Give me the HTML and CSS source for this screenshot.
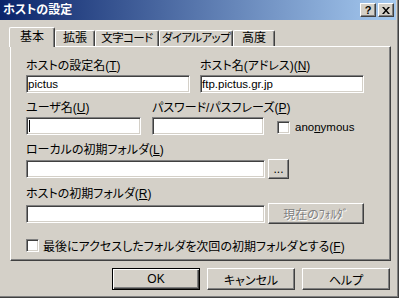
FILE: index.html
```html
<!DOCTYPE html>
<html lang="ja">
<head>
  <meta charset="UTF-8" />
  <title>ホストの設定</title>
  <link rel="stylesheet" href="styles.css">
</head>
<body>
  <div class="window">
    <div class="titlebar">
      <span class="title">ホストの設定</span>
      <div class="caption-buttons">
        <div class="cap-btn help">?</div>
        <div class="cap-btn">
          <svg width="8" height="7" viewBox="0 0 8 7"><path d="M0 0h2l2 2.5 2-2.5h2l-3 3.5 3 3.5h-2l-2-2.5-2 2.5h-2l3-3.5z" fill="#000"/></svg>
        </div>
      </div>
    </div>

    <div class="client">
      <div class="tabs">
        <div class="tab active t-basic">基本</div>
        <div class="tab t-ext">拡張</div>
        <div class="tab t-code">文字コード</div>
        <div class="tab t-dial">ダイアルアップ</div>
        <div class="tab t-adv">高度</div>
      </div>

      <div class="panel">
        <div class="row">
          <div class="field w-half">
            <div class="label">ホストの設定名(<u>T</u>)</div>
            <div class="edit">pictus</div>
          </div>
          <div class="field w-half ml-host">
            <div class="label">ホスト名(アドレス)(<u>N</u>)</div>
            <div class="edit">ftp.pictus.gr.jp</div>
          </div>
        </div>

        <div class="row bottom">
          <div class="field w-user">
            <div class="label">ユーザ名(<u>U</u>)</div>
            <div class="edit"><span class="caret"></span></div>
          </div>
          <div class="field w-pass ml-pass">
            <div class="label">パスワード/パスフレーズ(<u>P</u>)</div>
            <div class="edit"></div>
          </div>
          <div class="check ml-anon">
            <span class="box"></span>
            <span class="latin">ano<u>n</u>ymous</span>
          </div>
        </div>

        <div class="field">
          <div class="label">ローカルの初期フォルダ(<u>L</u>)</div>
          <div class="line">
            <div class="edit w-path"></div>
            <div class="btn small">...</div>
          </div>
        </div>

        <div class="field">
          <div class="label">ホストの初期フォルダ(<u>R</u>)</div>
          <div class="line">
            <div class="edit w-path"></div>
            <div class="btn current disabled">現在のﾌｫﾙﾀﾞ</div>
          </div>
        </div>

        <div class="check last">
          <span class="box"></span>
          <span>最後にアクセスしたフォルダを次回の初期フォルダとする(<u>F</u>)</span>
        </div>
      </div>

      <div class="footer">
        <div class="btn default">OK</div>
        <div class="btn">キャンセル</div>
        <div class="btn">ヘルプ</div>
      </div>
    </div>
  </div>
</body>
</html>
```

FILE: styles.css
```css
* { box-sizing: border-box; }
body { margin: 0; background: #d4d0c8; color: #000; font: 12px "Liberation Sans", "Noto Sans CJK JP", sans-serif; font-feature-settings: "palt"; }
u { text-decoration: underline; text-underline-offset: 1px; }

.window { width: 399px; height: 298px; background: #d4d0c8; border-right: 1px solid #404040; border-bottom: 1px solid #404040; box-shadow: inset -1px -1px #808080; }

.titlebar { height: 20px; margin-right: 2px; padding: 0 2px 0 3px; display: flex; align-items: center; justify-content: space-between; background: linear-gradient(to right, #0a246a, #a6caf0); }
.title { color: #fff; font-weight: bold; font-size: 12px; line-height: 20px; }
.caption-buttons { display: flex; gap: 2px; }
.cap-btn { width: 16px; height: 14px; display: flex; align-items: center; justify-content: center; background: #d4d0c8; border: 1px solid; border-color: #fff #404040 #404040 #fff; box-shadow: inset -1px -1px #808080; }
.cap-btn.help { font: bold 11px "Liberation Sans", sans-serif; line-height: 12px; }

.client { padding: 7px 7px 0 10px; }

.tabs { display: flex; align-items: flex-end; height: 19px; }
.tab { height: 16px; text-align: center; font-size: 11.5px; letter-spacing: -0.6px; line-height: 15px; white-space: nowrap; border: 1px solid; border-bottom: 0; border-color: #fff #404040 #404040 #fff; border-radius: 2px 2px 0 0; box-shadow: inset -1px 0 #808080; background: #d4d0c8; }
.tab.active { position: relative; z-index: 1; height: 20px; margin: 0 0 -1px -1px; line-height: 18px; font-size: 12px; letter-spacing: 0; }
.t-basic { width: 46px; }
.t-ext { width: 40px; letter-spacing: 0; font-size: 12px; }
.t-code { width: 64px; }
.t-dial { width: 74px; }
.t-adv { width: 42px; letter-spacing: 0; font-size: 12px; }

.panel { height: 215px; padding: 12px 0 0 15px; border: 1px solid; border-color: #fff #404040 #404040 #fff; box-shadow: inset -1px -1px #808080; display: flex; flex-direction: column; gap: 8px; }

.row { display: flex; }
.row.bottom { align-items: flex-end; }
.field { display: flex; flex-direction: column; }
.label { height: 14px; line-height: 14px; margin-bottom: 2px; white-space: nowrap; }
.line { display: flex; align-items: center; }

.w-half { width: 164px; }
.ml-host { margin-left: 10px; }
.w-user { width: 115px; }
.w-pass { width: 112px; }
.ml-pass { margin-left: 11px; }
.ml-anon { margin-left: 13px; margin-bottom: 1px; }
.w-path { width: 239px; }

.edit { height: 18px; padding: 0 1px; font-size: 11.5px; line-height: 16px; background: #fff; border: 1px solid; border-color: #808080 #fff #fff #808080; box-shadow: inset 1px 1px #404040, inset -1px -1px #d4d0c8; white-space: nowrap; overflow: hidden; }
.caret { display: inline-block; width: 1px; height: 12px; margin: 2px 0 0 1px; background: #000; vertical-align: top; }
.latin { font-size: 11.5px; }

.check { display: flex; align-items: center; gap: 5px; height: 14px; white-space: nowrap; }
.check.last { margin-top: 6px; gap: 4px; }
.box { width: 13px; height: 13px; background: #fff; border: 1px solid; border-color: #808080 #fff #fff #808080; box-shadow: inset 1px 1px #404040, inset -1px -1px #d4d0c8; }

.btn { height: 22px; width: 88px; display: flex; align-items: center; justify-content: center; background: #d4d0c8; border: 1px solid; border-color: #fff #404040 #404040 #fff; box-shadow: inset -1px -1px #808080; white-space: nowrap; }
.btn.small { width: 21px; height: 20px; margin-left: 3px; }
.btn.current { width: 96px; height: 21px; margin-left: 3px; }
.btn.disabled { color: #808080; text-shadow: 1px 1px #fff; }
.btn.default { border-color: #000; box-shadow: inset 1px 1px #fff, inset -1px -1px #404040, inset -2px -2px #808080; }

.footer { display: flex; justify-content: flex-end; gap: 7px; margin: 7px 1px 0 0; }
```
